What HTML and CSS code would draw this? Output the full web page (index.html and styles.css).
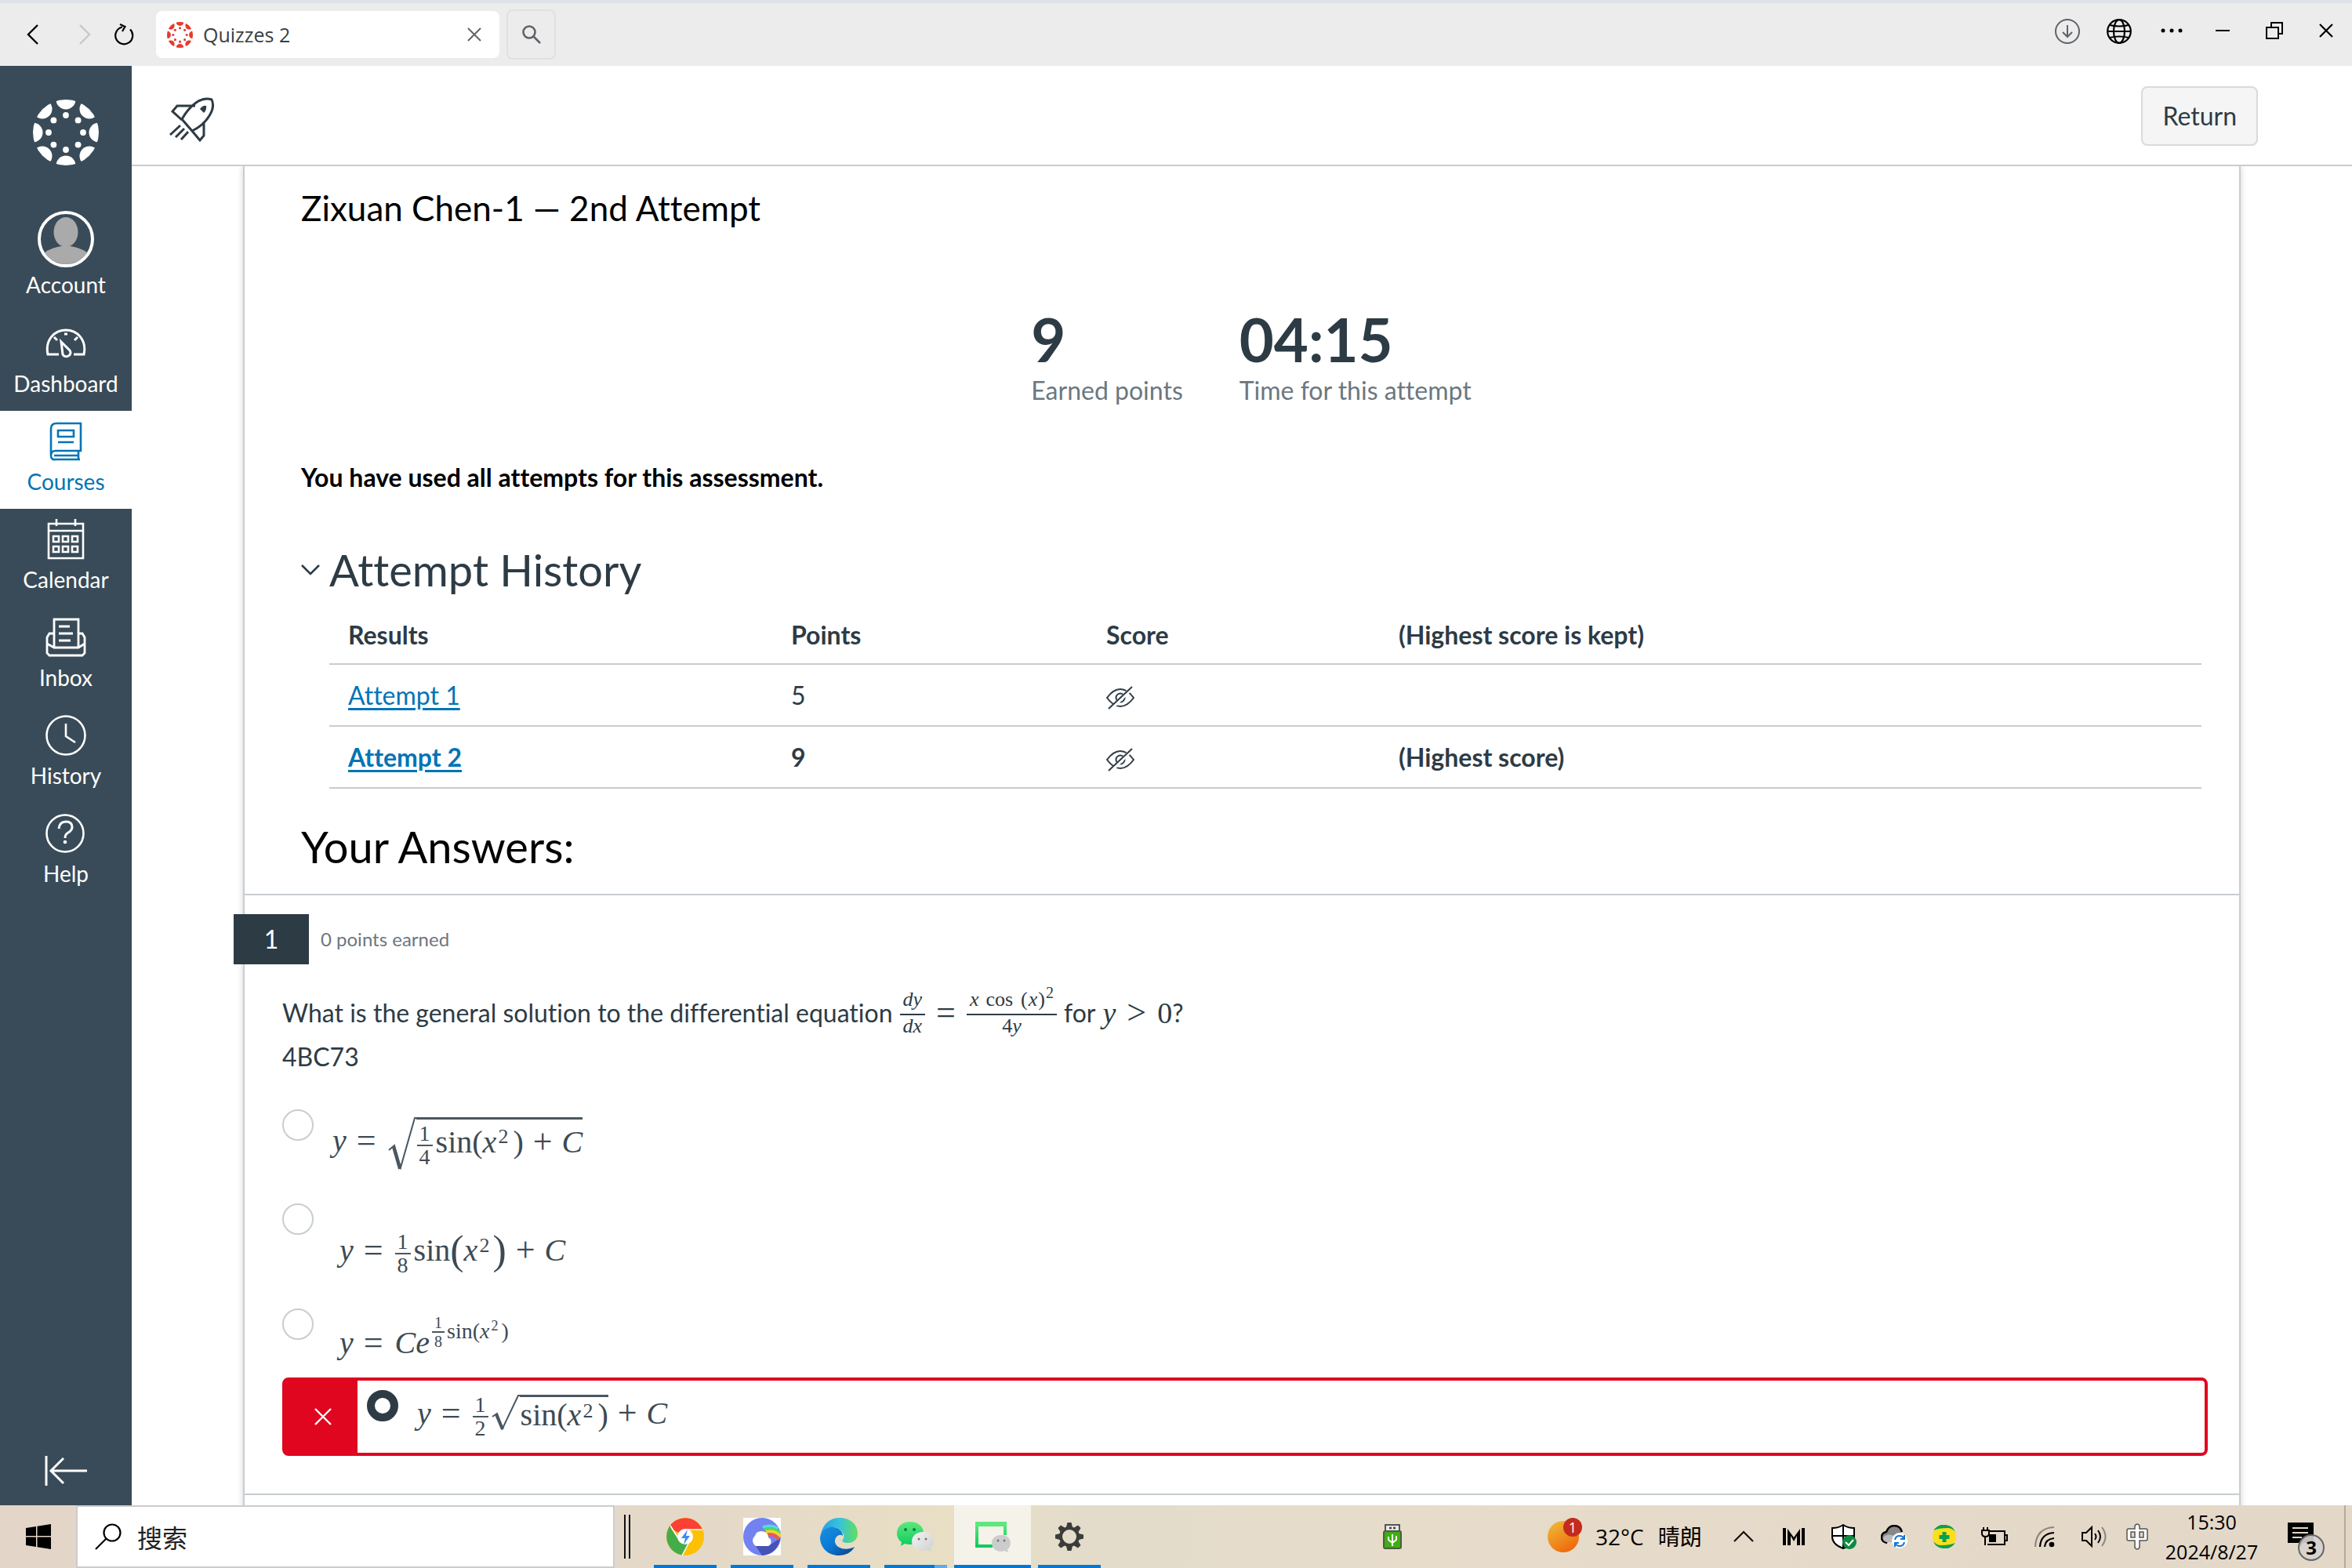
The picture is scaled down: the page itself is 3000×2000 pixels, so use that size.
FILE: index.html
```html
<!DOCTYPE html>
<html lang="en">
<head>
<meta charset="utf-8">
<title>Quizzes 2</title>
<link rel="stylesheet" href="styles.css">
</head>
<body>
<svg class="defs" aria-hidden="true">
  <defs>
    <clipPath id="disc"><circle cx="42" cy="42" r="42"/></clipPath>
    <symbol id="canvas-logo" viewBox="0 0 84 84">
      <g clip-path="url(#disc)">
        <circle cx="42" cy="0" r="12.5"/><circle cx="42" cy="84" r="12.5"/><circle cx="0" cy="42" r="12.5"/><circle cx="84" cy="42" r="12.5"/>
        <circle cx="12" cy="12" r="12.5"/><circle cx="72" cy="12" r="12.5"/><circle cx="12" cy="72" r="12.5"/><circle cx="72" cy="72" r="12.5"/>
      </g>
      <circle cx="42" cy="20" r="3.9"/><circle cx="42" cy="64" r="3.9"/><circle cx="20" cy="42" r="3.9"/><circle cx="64" cy="42" r="3.9"/>
      <circle cx="26.4" cy="26.4" r="3.9"/><circle cx="57.6" cy="26.4" r="3.9"/><circle cx="26.4" cy="57.6" r="3.9"/><circle cx="57.6" cy="57.6" r="3.9"/>
    </symbol>
    <symbol id="hidden-eye" viewBox="0 0 36 30">
      <g fill="none" stroke="#2d3b45" stroke-width="2"><path d="M1 15Q9 4 18 4T35 15Q27 26 18 26T1 15Z"/><circle cx="18" cy="15" r="5.5"/></g>
      <path d="M4 31 34 1" stroke="#fff" stroke-width="5"/><path d="M3 29 33 1" stroke="#2d3b45" stroke-width="2"/>
    </symbol>
    <linearGradient id="wx" x1="0" y1="0" x2="0" y2="1"><stop offset="0" stop-color="#5ce87c"/><stop offset="1" stop-color="#0ecb60"/></linearGradient>
    <linearGradient id="gray" x1="0" y1="0" x2="1" y2="1"><stop offset="0" stop-color="#f4f4f4"/><stop offset="1" stop-color="#cfcfcf"/></linearGradient>
    <linearGradient id="edge-top" x1="0" y1="0" x2="1" y2="0"><stop offset="0" stop-color="#2a9fe0"/><stop offset=".5" stop-color="#36c3dd"/><stop offset="1" stop-color="#62df5b"/></linearGradient>
    <linearGradient id="edge-body" x1="0" y1="0" x2="1" y2="1"><stop offset="0" stop-color="#1b8fe0"/><stop offset=".5" stop-color="#0a78d4"/><stop offset="1" stop-color="#0c3f80"/></linearGradient>
    <linearGradient id="sun" x1="0" y1="0" x2=".6" y2="1"><stop offset="0" stop-color="#eec03a"/><stop offset="1" stop-color="#f06a0c"/></linearGradient>
  </defs>
</svg>

<header class="browser">
  <nav class="browser-nav">
    <button class="plain" aria-label="Back"><svg width="16" height="28" viewBox="0 0 16 28"><path d="M14 2 2 14l12 12" fill="none" stroke="#000" stroke-width="2.4"/></svg></button>
    <button class="plain" aria-label="Forward"><svg width="16" height="28" viewBox="0 0 16 28"><path d="M2 2l12 12L2 26" fill="none" stroke="#c8c8c8" stroke-width="2.4"/></svg></button>
    <button class="plain" aria-label="Reload"><svg width="26" height="28" viewBox="0 0 26 28"><path d="M21 7.500A11 11 0 1 1 11 4.500M8 1l6.500 3L11 10" fill="none" stroke="#000" stroke-width="2.2"/></svg></button>
  </nav>
  <div class="tab">
    <svg class="favicon" width="33" height="33"><use href="#canvas-logo"/></svg>
    <span class="tab-title">Quizzes 2</span>
    <button class="plain" aria-label="Close tab"><svg width="18" height="18" viewBox="0 0 18 18"><path d="M1 1l16 16M17 1 1 17" stroke="#5f6368" stroke-width="2"/></svg></button>
  </div>
  <button class="tab-search" aria-label="Search tabs"><svg width="26" height="26" viewBox="0 0 26 26"><g fill="none" stroke="#5f6368" stroke-width="2.600"><circle cx="10" cy="10" r="7.500"/><path d="M15 15l9 9"/></g></svg></button>
  <div class="window-tools">
    <button class="plain" aria-label="Downloads"><svg width="32" height="32" viewBox="0 0 32 32"><g fill="none" stroke="#5f6368" stroke-width="2"><circle cx="16" cy="16" r="15"/><path d="M16 8v15M10 17l6 6 6-6"/></g></svg></button>
    <button class="plain" aria-label="Web"><svg width="32" height="32" viewBox="0 0 32 32"><g fill="none" stroke="#000" stroke-width="2.200"><circle cx="16" cy="16" r="14.800"/><ellipse cx="16" cy="16" rx="7" ry="14.800"/><path d="M1 16h30M4 8q12 3 24 0M4 24q12-3 24 0"/></g></svg></button>
    <button class="plain" aria-label="More"><svg width="28" height="32" viewBox="0 0 28 32"><circle cx="3" cy="15" r="2.500"/><circle cx="14" cy="15" r="2.500"/><circle cx="25" cy="15" r="2.500"/></svg></button>
    <button class="plain" aria-label="Minimize"><svg width="18" height="32" viewBox="0 0 18 32"><path d="M0 15h18" stroke="#000" stroke-width="2"/></svg></button>
    <button class="plain" aria-label="Restore"><svg width="22" height="32" viewBox="0 0 22 32"><g fill="none" stroke="#000" stroke-width="2"><path d="M7 10V5h14v14h-5"/><rect x="1" y="11" width="15" height="14"/></g></svg></button>
    <button class="plain" aria-label="Close"><svg width="18" height="32" viewBox="0 0 18 32"><path d="M1 7l16 16M17 7 1 23" stroke="#000" stroke-width="2.200"/></svg></button>
  </div>
</header>

<div class="app">
  <nav class="sidebar">
    <a href="#" class="logo" aria-label="Canvas"><svg width="84" height="84"><use href="#canvas-logo"/></svg></a>
    <a href="#" class="item account"><span class="glyph"><svg width="72" height="72" viewBox="0 0 72 72"><clipPath id="av"><circle cx="36" cy="36" r="32"/></clipPath><g clip-path="url(#av)" fill="#aaa"><ellipse cx="36" cy="27" rx="15.500" ry="19"/><path d="M4 72V58q6-9 26-13h12q20 4 26 13v14z"/></g><circle cx="36" cy="36" r="34" fill="none" stroke="#fff" stroke-width="4"/></svg></span>Account</a>
    <a href="#" class="item"><span class="glyph"><svg width="52" height="38" viewBox="0 0 52 38"><g fill="none" stroke="#fff" stroke-width="3"><path d="M17 33H3C-1 14 12 2 26 2s27 12 23 31H36M20 17l11 11c4 6-6 11-9 5z"/><path d="M24 7h4M11 11l4 4M41 11l-4 4"/></g></svg></span>Dashboard</a>
    <a href="#" class="item active" aria-current="page"><span class="glyph"><svg width="42" height="50" viewBox="0 0 42 50"><g fill="none" stroke="#0374b5" stroke-width="2.600"><path d="M2 42V9q0-7 7-7h31v35H8q-6 0-6 6t6 5h31M37 37v11M6 43h31M11 11h20v8H11zM11 26h20"/></g></svg></span>Courses</a>
    <a href="#" class="item"><span class="glyph"><svg width="48" height="52" viewBox="0 0 48 52"><g fill="none" stroke="#fff" stroke-width="2.600"><path d="M2 6h44v44H2zM2 15h44M12 0v9M36 0v9"/><path d="M8 22h7v7H8zM20 22h7v7h-7zM32 22h7v7h-7zM8 35h7v7H8zM20 35h7v7h-7zM32 35h7v7h-7z"/></g></svg></span>Calendar</a>
    <a href="#" class="item"><span class="glyph"><svg width="52" height="50" viewBox="0 0 52 50"><g fill="none" stroke="#fff" stroke-width="2.800"><path d="M11 38V2h31v36M17 11h14M17 20h18M17 29h15M11 20H5l-3 5v20l3 3h42l3-3V25l-3-5h-5M2 33l9 5h31l8-5"/></g></svg></span>Inbox</a>
    <a href="#" class="item"><span class="glyph"><svg width="52" height="52" viewBox="0 0 52 52"><g fill="none" stroke="#fff" stroke-width="2.600"><circle cx="26" cy="26" r="24.500"/><path d="M26 11v16l12 8"/></g></svg></span>History</a>
    <a href="#" class="item"><span class="glyph"><svg width="52" height="52" viewBox="0 0 52 52"><circle cx="25" cy="26" r="23.500" fill="none" stroke="#fff" stroke-width="2.600"/><path d="M17 20q1-9 9-9 8 0 8 7 0 4-5 7-4 2-4 7" fill="none" stroke="#fff" stroke-width="3"/><circle cx="25" cy="37" r="2.300" fill="#fff"/></svg></span>Help</a>
    <button class="plain collapse" aria-label="Minimize navigation"><svg width="54" height="40" viewBox="0 0 54 40"><path d="M2 1v38M54 20H8M24 4 8 20l16 16" fill="none" stroke="#fff" stroke-width="3"/></svg></button>
  </nav>

  <main class="page">
    <div class="toolbar">
      <svg width="58" height="58" viewBox="0 0 58 58"><g fill="none" stroke="#2d3b45" stroke-width="3"><path d="M29 43 16 28Q24 14 34 7 44 0 54 3 58 12 52 22 44 36 29 43ZM33 11H10l-6 7 12 11M29 43l10 12 5-6V31"/><path d="M14 36 1 48M19 40 8 51M24 44l-9 10"/></g><path d="M39 15q4-5 8-4 1 5-3 9z" fill="#2d3b45"/></svg>
      <button class="return">Return</button>
    </div>

    <div class="scroller">
      <article class="result">
        <section class="summary">
          <h1>Zixuan Chen-1 — 2nd Attempt</h1>
          <dl class="stats">
            <div><dd>9</dd><dt>Earned points</dt></div>
            <div><dd>04:15</dd><dt>Time for this attempt</dt></div>
          </dl>
          <p class="notice">You have used all attempts for this assessment.</p>
          <h2 class="history-title"><button class="plain" aria-label="Toggle attempt history"><svg width="24" height="16" viewBox="0 0 24 16"><path d="M1 2l11 11L23 2" fill="none" stroke="#2d3b45" stroke-width="2.600"/></svg></button>Attempt History</h2>
          <table class="history">
            <colgroup><col class="c-results"><col class="c-points"><col class="c-score"><col></colgroup>
            <thead><tr><th scope="col">Results</th><th scope="col">Points</th><th scope="col">Score</th><th scope="col">(Highest score is kept)</th></tr></thead>
            <tbody>
              <tr><td><a href="#">Attempt 1</a></td><td>5</td><td><svg width="36" height="30" role="img" aria-label="Hidden"><use href="#hidden-eye"/></svg></td><td></td></tr>
              <tr class="best"><td><a href="#">Attempt 2</a></td><td>9</td><td><svg width="36" height="30" role="img" aria-label="Hidden"><use href="#hidden-eye"/></svg></td><td>(Highest score)</td></tr>
            </tbody>
          </table>
          <h2 class="answers-title">Your Answers:</h2>
        </section>

        <section class="question">
          <div class="question-head"><span class="number">1</span><span class="earned">0 points earned</span></div>
          <div class="question-body">
            <p class="prompt">
              <span>What is the general solution to the differential equation</span>
              <span class="math small"><span class="frac"><i>dy</i><i>dx</i></span><span class="rel">=</span><span class="frac"><span class="terms"><i>x</i><span>cos</span><span><span class="paren">(</span><i>x</i><span class="paren">)</span><sup>2</sup></span></span><span>4<i>y</i></span></span></span>
              <span>for</span>
              <span class="math tail"><i>y</i><span class="rel">&gt;</span>0</span><span>?</span>
            </p>
            <p class="code">4BC73</p>

            <div class="options" role="radiogroup" aria-label="Answers">
              <label class="option first"><input type="radio" name="q1">
                <span class="math"><i>y</i><span class="rel">=</span><svg class="root tall" width="36" height="70" viewBox="0 0 36 70"><path d="M1 42 8 36 16 64 34 1H36" fill="none" stroke="#4a5761" stroke-width="2"/><path d="M7 38l8 28" stroke="#4a5761" stroke-width="4"/></svg><span class="radicand tall"><span class="frac"><span>1</span><span>4</span></span>sin<span class="paren">(</span><i>x</i><sup>2</sup><span class="paren">)</span><span class="bin">+</span><i>C</i></span></span>
              </label>
              <label class="option second"><input type="radio" name="q1">
                <span class="math"><i>y</i><span class="rel">=</span><span class="frac"><span>1</span><span>8</span></span>sin<span class="paren big">(</span><i>x</i><sup>2</sup><span class="paren big">)</span><span class="bin">+</span><i>C</i></span>
              </label>
              <label class="option third"><input type="radio" name="q1">
                <span class="math"><i>y</i><span class="rel">=</span><i>C</i><i>e</i><span class="power"><span class="frac"><span>1</span><span>8</span></span>sin<span class="paren">(</span><i>x</i><sup>2</sup><span class="paren">)</span></span></span>
              </label>
              <div class="wrong">
                <span class="mark"><svg width="24" height="24" viewBox="0 0 24 24"><path d="M2 2l20 20M22 2 2 22" stroke="#fff" stroke-width="2.400"/></svg></span>
                <label class="option"><input type="radio" name="q1" checked>
                  <span class="math"><i>y</i><span class="rel">=</span><span class="frac"><span>1</span><span>2</span></span><svg class="root" width="36" height="48" viewBox="0 0 36 48"><path d="M1 28 7 24 14 43 34 1H36" fill="none" stroke="#4a5761" stroke-width="2"/><path d="M6 25l8 19" stroke="#4a5761" stroke-width="4"/></svg><span class="radicand">sin<span class="paren">(</span><i>x</i><sup>2</sup><span class="paren">)</span></span><span class="bin">+</span><i>C</i></span>
                </label>
              </div>
            </div>
          </div>
        </section>
        <section class="question next"></section>
      </article>
    </div>
  </main>
</div>

<footer class="taskbar">
  <button class="plain start" aria-label="Start"><svg width="32" height="32" viewBox="0 0 32 32"><path d="M0 5l13-2v12H0zM14.500 2.800 32 0v15H14.500zM0 16.500h13v12.500L0 27zM14.500 16.500H32V32l-17.500-2.800z"/></svg></button>
  <label class="search"><svg width="34" height="34" viewBox="0 0 34 34"><g fill="none" stroke="#000" stroke-width="2.200"><circle cx="22" cy="12" r="10.500"/><path d="M14.500 19.500 1 33"/></g></svg><input type="search" placeholder="搜索" aria-label="搜索"></label>
  <span class="grip"></span>
  <div class="apps">
    <button class="tile" aria-label="Chrome"><svg width="48" height="48" viewBox="0 0 48 48"><circle cx="24" cy="24" r="24" fill="#fcc004"/><path d="M24 24 3.200 12A24 24 0 0 1 46 15H24z" fill="#fb4034"/><path d="M4 11A24 24 0 0 0 20 47.600L30 30 16 28z" fill="#45ac4a"/><path d="M46 15H24" stroke="#fff" stroke-width="1.500"/><path d="M20 48 29 31M5 10l10 16" stroke="#fff" stroke-width="1.500"/><circle cx="24" cy="24" r="10" fill="#fff"/><path d="M27 15l-8 11h5l-2 8 8-11h-5z" fill="#4389f5"/></svg></button>
    <button class="tile" aria-label="Cloud drive"><svg width="48" height="48" viewBox="0 0 48 48"><rect width="48" height="48" fill="#fff"/><circle cx="24" cy="24" r="24" fill="#7382f0"/><path d="M16 36h16l15-10a24 24 0 0 1-23 22l-8-12z" fill="#4652b4"/><g fill="none" stroke-width="3.600"><path d="M25 12q12-4 19 2" stroke="#4fd9e8"/><path d="M27 15q12-3 20 4" stroke="#56d660"/><path d="M29 18q12-3 19 6" stroke="#ffd21f"/><path d="M31 22q10-2 14 6" stroke="#f4544f"/></g><path d="M16 36a8 8 0 0 1-1-13q1-6 9-6 8 1 8 8a6 6 0 0 1 0 11z" fill="#fff"/></svg></button>
    <button class="tile" aria-label="Edge"><svg width="48" height="48" viewBox="0 0 48 48"><path d="M1 21C4 7 13 0 25 0c14 0 23 9 23 20 0 8-6 12-12 12-6 0-9-2-7-4 2-3 2-7-1-10C22 9 6 11 1 21z" fill="url(#edge-top)"/><path d="M0 25C1 16 9 11 17 12c7 1 12 5 12 11-3-3-10 0-10 7 0 8 13 13 25 7-4 7-11 11-20 11C10 48 0 38 0 25z" fill="url(#edge-body)"/></svg></button>
    <button class="tile partial" aria-label="WeChat"><svg width="48" height="40" viewBox="0 0 48 40"><path d="M17 1c10 0 17 6 17 15S27 30 17 30q-4 0-7-1l-5 3 1-5Q0 23 0 16C0 7 7 1 17 1z" fill="url(#wx)"/><path d="M33 14c9 0 14 5 14 12q0 6-4 9l1 4-5-2q-3 1-6 1c-8 0-14-5-14-12s6-12 14-12z" fill="url(#gray)"/><g fill="#07843d"><circle cx="11" cy="11" r="2"/><circle cx="22" cy="11" r="2"/></g><g fill="#777"><circle cx="28" cy="23" r="1.500"/><circle cx="37" cy="23" r="1.500"/></g></svg></button>
    <button class="tile current" aria-label="WeChat window"><svg width="48" height="40" viewBox="0 0 48 40"><path d="M4 3h36v15M4 3v29h20" fill="none" stroke="url(#wx)" stroke-width="4"/><path d="M2 1h40v6H2z" fill="#5ce87c"/><path d="M35 18c7 0 12 4 12 10q0 5-4 8l1 4-5-2q-2 1-4 1c-7 0-12-5-12-11s5-10 12-10z" fill="#ccc"/><circle cx="31" cy="25" r="1.500" fill="#777"/><circle cx="39" cy="25" r="1.500" fill="#777"/></svg></button>
    <button class="tile" aria-label="Settings"><svg width="38" height="38" viewBox="-19 -19 38 38"><circle r="11" fill="none" stroke="#3c3c3a" stroke-width="4"/><g fill="#3c3c3a"><path id="tooth" d="M-4-12-2.500-18h5L4-12z"/><use href="#tooth" transform="rotate(45)"/><use href="#tooth" transform="rotate(90)"/><use href="#tooth" transform="rotate(135)"/><use href="#tooth" transform="rotate(180)"/><use href="#tooth" transform="rotate(225)"/><use href="#tooth" transform="rotate(270)"/><use href="#tooth" transform="rotate(315)"/></g></svg></button>
  </div>
  <svg class="usb" width="24" height="32" viewBox="0 0 24 32"><rect x="3" y="1" width="18" height="10" fill="#e8e8e8" stroke="#555" stroke-width="2"/><path d="M8 5h3M13 5h3" stroke="#444" stroke-width="2.500"/><rect x="1" y="9" width="22" height="22" rx="2" fill="#3fae12" stroke="#4d5b45" stroke-width="2"/><path d="M12 13v15M7 16v4l5 4M17 15v5l-5 4" fill="none" stroke="#fff" stroke-width="2"/></svg>
  <div class="weather">
    <span class="sun"><svg width="40" height="40"><circle cx="20" cy="20" r="20" fill="url(#sun)"/></svg><span class="alert">1</span></span>
    <span>32°C</span><span>晴朗</span>
  </div>
  <div class="tray">
    <button class="plain" aria-label="Hidden icons"><svg width="28" height="16" viewBox="0 0 28 16"><path d="M2 14 14 2l12 12" fill="none" stroke="#111" stroke-width="2.200"/></svg></button>
    <button class="plain" aria-label="Monitor"><svg width="28" height="22" viewBox="0 0 28 22"><path d="M0 0h4v22H0zM24 0h4v22h-4zM6 22V1l8 11 8-11v21h-4V10l-4 7-4-7v12z"/></svg></button>
    <button class="plain" aria-label="Security"><svg width="32" height="32" viewBox="0 0 32 32"><path d="M15 1Q9 5 1 5v11q0 10 14 15Q29 26 29 16V5Q21 5 15 1z" fill="#fff" stroke="#000" stroke-width="2"/><path d="M15 1v30M1 15h28" stroke="#000" stroke-width="2"/><circle cx="23" cy="23" r="9" fill="#0e8a42"/><path d="M18 23l4 4 6-7" fill="none" stroke="#fff" stroke-width="2"/></svg></button>
    <button class="plain" aria-label="Cloud sync"><svg width="34" height="30" viewBox="0 0 34 30"><path d="M8 23q-7-1-7-7 0-6 6-7Q10 1 17 1q8 0 10 8" fill="#888" stroke="#000" stroke-width="2.400"/><path d="M8 22q-6-1-5-6 6-6 14-2v8z" fill="#bbb"/><circle cx="24" cy="20" r="10" fill="#fff"/><path d="M18 19q1-5 6-5 4 0 5 3M30 13v5h-5M30 22q-1 5-6 5-4 0-5-3M18 28v-5h5" fill="none" stroke="#1874cd" stroke-width="2"/></svg></button>
    <button class="plain" aria-label="Antivirus"><svg width="30" height="30" viewBox="0 0 30 30"><circle cx="15" cy="15" r="15" fill="#fedd1c"/><path d="M1 7Q8-2 17 0q9 1 12 9-4-5-10-5Q8 4 1 7zM29 23q-7 9-16 7-9-1-12-9 4 5 10 5 11 0 18-3zM12.500 9h5v4h4v5h-4v4h-5v-4h-4v-5h4z" fill="#0aa24c"/></svg></button>
    <button class="plain" aria-label="Battery"><svg width="34" height="26" viewBox="0 0 34 26"><path d="M11 6h19v17H8M30 11h3v7h-3M5 13v11M1 5h9v4q0 4-4.500 4T1 9zM3 1v4M8 1v4" fill="none" stroke="#000" stroke-width="2"/><path d="M10 10h9v10h-9z"/></svg></button>
    <button class="plain" aria-label="Wi-Fi"><svg width="26" height="28" viewBox="0 0 26 28"><g fill="none" stroke="#000" stroke-width="2.200"><path d="M1 27Q2 3 25 2" stroke="#8d867c"/><path d="M7 27Q8 10 25 9M13 27q1-10 12-11"/></g><circle cx="22" cy="24" r="3.300"/></svg></button>
    <button class="plain" aria-label="Volume"><svg width="34" height="28" viewBox="0 0 34 28"><g fill="none" stroke="#000" stroke-width="2"><path d="M1 9h5l7-7v24l-7-7H1zM17 10q3 4 0 8M21 6q6 8 0 16"/><path d="M26 2q9 12 0 24" stroke="#8d867c"/></g></svg></button>
    <button class="plain ime" aria-label="Input method"><svg width="28" height="34" viewBox="0 0 28 34"><path d="M11 3q3-4 6 0v4h8q2 0 2 2v11q0 2-2 2h-8v9q-3 4-6 0v-9H3q-2 0-2-2V9q0-2 2-2h8z" fill="#fff" stroke="#555" stroke-width="1.500"/><path d="M6 11h5v7H6zM17 11h5v7h-5z" fill="#e4d8c8" stroke="#555" stroke-width="1.500"/></svg></button>
  </div>
  <div class="clock"><time>15:30</time><time>2024/8/27</time></div>
  <button class="plain notify" aria-label="Notifications"><svg width="34" height="36" viewBox="0 0 34 36"><path d="M0 0h33v26H20l-6 7v-7H0z"/><path d="M6 7h20M6 13h20M6 19h12" stroke="#e4d8c8" stroke-width="2"/></svg><span class="count">3</span></button>
</footer>
</body>
</html>
```
FILE: styles.css
```css
* { box-sizing: border-box; }

:root {
  --ink: #2d3b45;
  --line: #c7cdd1;
  --link: #0374b5;
  --slate: #394b58;
  --muted: #6b7780;
  --ui: "Open Sans", "Noto Sans", "Noto Sans CJK SC", sans-serif;
}

body {
  margin: 0;
  height: 100vh;
  display: flex;
  flex-direction: column;
  overflow: hidden;
  background: #fff;
  color: var(--ink);
  font: 32px/40px Lato, "Noto Sans CJK SC", sans-serif;
  font-variant-ligatures: none;
}

h1, h2, p, dl, dd { margin: 0; }
svg { display: block; flex: none; }
.defs { position: absolute; width: 0; height: 0; }
.plain {
  display: flex;
  align-items: center;
  justify-content: center;
  padding: 0;
  border: 0;
  background: none;
  color: inherit;
  font: inherit;
}

/* Browser bar */
.browser {
  flex: none;
  display: flex;
  align-items: center;
  height: 84px;
  padding: 0 24px 0 34px;
  border-top: 4px solid #dee1e6;
  background: #ececec;
  font-family: var(--ui);
}
.browser-nav { display: flex; align-items: center; width: 165px; }
.browser-nav .plain:nth-child(2) { margin: 0 29px 0 50px; }
.tab {
  display: flex;
  align-items: center;
  width: 438px;
  height: 60px;
  padding: 0 23px 0 14px;
  border-radius: 8px;
  background: #fff;
}
.favicon { fill: #e63b2e; }
.tab-title { flex: 1; padding-left: 13px; color: #3c4043; font-size: 25px; line-height: 32px; }
.tab-search {
  display: flex;
  align-items: center;
  justify-content: center;
  width: 63px;
  height: 64px;
  margin-left: 9px;
  padding: 0;
  border: 2px solid #e0e0e0;
  border-radius: 8px;
  background: none;
}
.window-tools { display: flex; align-items: center; gap: 42px; margin-left: auto; padding-bottom: 8px; }
.window-tools .plain:nth-child(2) { margin-left: -8px; margin-right: -5px; }
.window-tools .plain:nth-child(5) { margin: 0 4px; }

/* Shell */
.app { flex: 1; min-height: 0; display: flex; }
.sidebar {
  flex: none;
  display: flex;
  flex-direction: column;
  width: 168px;
  background: var(--slate);
}
.logo { display: flex; justify-content: center; padding: 43px 0 44px; fill: #fff; }
.item {
  display: flex;
  flex-direction: column;
  align-items: center;
  height: 125px;
  padding-top: 5px;
  color: #fff;
  font-size: 28px;
  line-height: 34px;
  text-decoration: none;
}
.glyph { display: flex; align-items: center; justify-content: center; height: 68px; }
.account { height: 144px; padding-top: 9px; }
.account .glyph { height: 82px; }
.item.active { background: #fff; color: var(--link); }
.collapse { width: 100%; margin: auto 0 24px; }

.page { flex: 1; min-width: 0; display: flex; flex-direction: column; }
.toolbar {
  flex: none;
  display: flex;
  align-items: center;
  justify-content: space-between;
  height: 128px;
  padding: 2px 120px 0 48px;
  border-bottom: 2px solid var(--line);
}
.toolbar svg { margin-top: 10px; }
.return {
  height: 76px;
  padding: 0 25px;
  border: 2px solid #d8dadb;
  border-radius: 8px;
  background: #f5f5f5;
  color: var(--ink);
  font: inherit;
}

.scroller { flex: 1; min-height: 0; overflow: hidden; padding: 0 142px; }
.result {
  min-height: 100%;
  border: solid var(--line);
  border-width: 0 2px;
  box-shadow: 0 0 8px rgba(0, 0, 0, .18);
}

/* Summary */
.summary { padding: 27px 48px 26px 72px; border-bottom: 2px solid var(--line); }
h1 { color: #000; font-size: 44px; font-weight: 400; line-height: 52px; }
.stats { display: flex; justify-content: center; gap: 72px; margin-top: 97px; }
.stats div { display: flex; flex-direction: column; }
.stats dd { font-size: 76px; font-weight: 700; line-height: 90px; }
.stats dt { color: var(--muted); }
.notice { margin-top: 71px; color: #000; font-weight: 700; }
h2 { font-size: 56px; font-weight: 400; line-height: 68px; }
.history-title { display: flex; align-items: center; gap: 12px; margin-top: 64px; }
.answers-title { margin-top: 40px; color: #000; }

.history {
  width: calc(100% - 36px);
  margin: 12px 0 0 36px;
  border-collapse: collapse;
  table-layout: fixed;
}
.c-results { width: 565px; }
.c-points { width: 402px; }
.c-score { width: 373px; }
.history th, .history td { height: 79px; padding: 0 24px; border-bottom: 2px solid var(--line); text-align: left; }
.history th { height: 74px; }
.history td svg { margin-top: 6px; }
.history a { color: var(--link); text-decoration-thickness: 3px; text-underline-offset: 4px; }
.best { font-weight: 700; }

/* Question */
.question { padding: 24px 40px 48px 48px; border-bottom: 2px solid var(--line); }
.question-head { display: flex; align-items: center; gap: 15px; margin-left: -62px; }
.number { width: 96px; background: var(--ink); color: #fff; line-height: 64px; text-align: center; }
.earned { color: var(--muted); font-size: 24px; }
.question-body { padding-top: 32px; }
.prompt { display: flex; align-items: center; height: 60px; gap: 9px; }
.prompt > span:last-child { margin-left: -9px; }
.code { line-height: 52px; }

/* Formulas */
.math {
  display: flex;
  align-items: center;
  height: 60px;
  color: #3d4a54;
  font: 40px/60px "Liberation Serif", "Times New Roman", serif;
}
.math .rel { margin: 0 15px 0 13px; font-size: 44px; }
.math .bin { margin: 0 12px; font-size: 44px; }
.math sup { align-self: flex-start; font-size: 26px; line-height: 48px; margin: 0 4px 0 2px; }
.math .paren.big { font-size: 52px; line-height: 56px; }
.frac {
  display: inline-flex;
  flex-direction: column;
  align-items: center;
  margin: 8px 4px 0 0;
  font-size: 28px;
  line-height: 28px;
}
.frac > :first-child { padding: 0 3px; }
.frac > :last-child { padding: 0 3px; border-top: 2px solid #4a5761; }
.root.tall { align-self: flex-start; }
.radicand { display: flex; align-items: center; height: 48px; padding-left: 1px; border-top: 3px solid #4a5761; }
.math .radicand sup { margin-right: 6px; line-height: 36px; }
.radicand.tall { height: 60px; align-self: flex-start; }
.math .radicand.tall sup { line-height: 44px; }
.power { display: flex; align-items: center; margin: -30px 0 0 3px; font-size: 28px; }
.power .frac { margin: 2px 3px 0 0; font-size: 20px; line-height: 22px; }
.math .power sup { align-self: center; margin: -14px 4px 0 2px; font-size: 18px; line-height: 20px; }

.math.small { color: var(--ink); font-size: 26px; }
.math.small .frac { margin: 0; font-size: 26px; line-height: 24px; }
.math.small .frac > :first-child { padding: 0 4px 6px; }
.math.small .frac > :last-child { width: 100%; padding: 2px 0 0; border-color: var(--ink); text-align: center; }
.terms { display: flex; gap: 9px; }
.math.small .paren { padding: 0 1px; }
.math.small sup { margin: 0; font-size: 20px; line-height: 0; vertical-align: 10px; }
.math.small .rel { margin: 0 14px; }
.math.tail { color: var(--ink); font-size: 38px; }
.math.tail .rel { margin: 0 14px; }

/* Options */
.options { display: flex; flex-direction: column; gap: 18px; padding-top: 41px; }
.option { display: flex; align-items: flex-start; gap: 24px; }
.option input {
  appearance: none;
  flex: none;
  width: 40px;
  height: 40px;
  margin: 0;
  border: 2px solid var(--line);
  border-radius: 50%;
  background: #fff;
}
.option input:checked { border: 10px solid var(--ink); }
.first { padding-bottom: 32px; }
.first .math { margin-top: 10px; }
.second, .third { gap: 33px; }
.second { padding-bottom: 26px; }
.second .math { margin-top: 30px; }
.third .math { margin: 14px 0 -4px; }
.wrong {
  display: flex;
  height: 100px;
  border: 4px solid #e0061f;
  border-radius: 8px;
}
.mark { display: flex; align-items: center; justify-content: center; width: 92px; padding-left: 4px; background: #e0061f; }
.wrong .option { padding: 12px; }

/* Taskbar */
.taskbar {
  flex: none;
  display: flex;
  height: 80px;
  padding-right: 8px;
  background: linear-gradient(90deg, #e3d5c8, #e4d9c8 30%, #e8dfc4 41%, #e3dccb 46%, #e7dcca 60%, #e3d7c8);
  color: #000;
  font-family: var(--ui);
}
.start { width: 97px; }
.search {
  display: flex;
  align-items: center;
  gap: 20px;
  width: 687px;
  padding-left: 22px;
  border: 2px solid #ccc;
  background: #fff;
}
.search input {
  flex: 1;
  min-width: 0;
  padding: 0;
  border: 0;
  outline: 0;
  background: none;
  font: 32px/40px "Noto Sans CJK SC", sans-serif;
}
.search input::placeholder { color: #222; opacity: 1; }
.grip { width: 8px; height: 56px; margin: 12px 21px 0 12px; border: solid #111; border-width: 0 2px; }
.apps { display: flex; }
.tile {
  display: flex;
  align-items: center;
  justify-content: center;
  width: 98px;
  padding: 0;
  border: 0;
  background: linear-gradient(#0078d7, #0078d7) center bottom / 80px 4px no-repeat;
}
.tile.partial { background-image: linear-gradient(90deg, #0078d7 80%, #62aae6 80%); }
.tile.current { background: linear-gradient(#0078d7, #0078d7) center bottom / 98px 4px no-repeat, #f5f2ea; }
.usb { align-self: center; margin-left: auto; }
.weather { display: flex; align-items: center; width: 404px; gap: 18px; padding-left: 186px; font-size: 28px; }
.sun { position: relative; margin-right: 3px; }
.alert {
  position: absolute;
  top: -4px;
  right: -4px;
  width: 24px;
  border-radius: 50%;
  background: #c42b1c;
  color: #fff;
  font-size: 18px;
  line-height: 24px;
  text-align: center;
}
.tray { display: flex; }
.tray .plain { width: 64px; }
.tray .ime { width: 44px; }
.clock {
  display: flex;
  flex-direction: column;
  align-items: center;
  width: 146px;
  padding-top: 2px;
  font-size: 25px;
  line-height: 38px;
}
.notify { position: relative; width: 98px; justify-content: flex-start; padding-left: 24px; border-right: 2px solid #b3aba0; }
.count {
  position: absolute;
  top: 37px;
  left: 37px;
  width: 34px;
  border: 2px solid #666;
  border-radius: 50%;
  background: rgba(214, 211, 207, .9);
  font-size: 24px;
  font-weight: 700;
  line-height: 30px;
}
```
